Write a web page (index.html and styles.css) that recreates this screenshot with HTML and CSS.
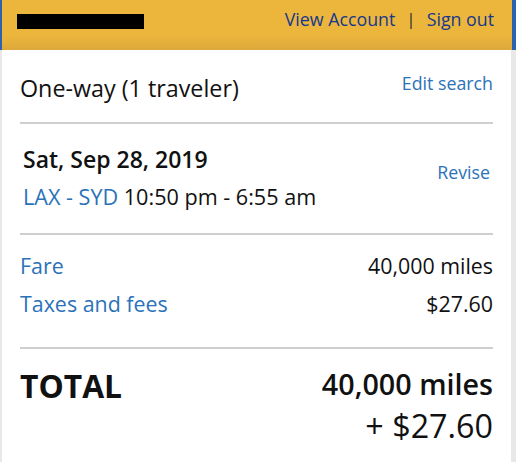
FILE: index.html
```html
<!DOCTYPE html>
<html lang="en">
<head>
<meta charset="utf-8">
<title>Trip summary</title>
<link rel="stylesheet" href="styles.css">
</head>
<body>
<header class="topbar">
  <span class="redacted" aria-label="Hi, traveler"></span>
  <nav class="account">
    <a href="#" class="acct-link">View Account</a>
    <span class="sep">|</span>
    <a href="#" class="acct-link">Sign out</a>
  </nav>
</header>
<main class="panel">
  <section class="row trip">
    <div class="trip-type">One-way (1 traveler)</div>
    <a href="#" class="link small edit">Edit search</a>
  </section>
  <section class="row flight">
    <div class="flight-info">
      <div class="date">Sat, Sep 28, 2019</div>
      <div class="route"><a href="#" class="link">LAX - SYD</a> 10:50 pm - 6:55 am</div>
    </div>
    <a href="#" class="link small revise">Revise</a>
  </section>
  <section class="costs">
    <div class="cost-row"><a href="#" class="link">Fare</a><span>40,000 miles</span></div>
    <div class="cost-row"><a href="#" class="link">Taxes and fees</a><span>$27.60</span></div>
  </section>
  <section class="row total">
    <div class="total-label">TOTAL</div>
    <div class="total-value">
      <div class="miles">40,000 miles</div>
      <div class="cash">+ $27.60</div>
    </div>
  </section>
</main>
</body>
</html>
```
FILE: styles.css
```css
html, body {
  margin: 0;
  padding: 0;
}
body {
  background: #e8e8e8;
  font-family: "Open Sans", "Noto Sans", sans-serif;
  color: #111;
  width: 516px;
  height: 462px;
  overflow: hidden;
}
a {
  text-decoration: none;
}
.topbar {
  height: 50px;
  box-sizing: border-box;
  border-left: 2px solid #2b63ad;
  border-right: 4px solid #2b63ad;
  background: linear-gradient(to bottom, #ecb63c 0, #ecb63c 36px, #dca83b 50px);
  display: flex;
  align-items: center;
  justify-content: space-between;
  padding: 0 18px 0 15px;
}
.redacted {
  display: block;
  width: 127px;
  height: 15px;
  background: #000;
  margin-top: -7px;
}
.account {
  display: flex;
  align-items: center;
  gap: 10px;
  margin-top: -13px;
  font-size: 17.8px;
}
.acct-link {
  color: #15388e;
}
.sep {
  color: #2c2c2c;
  font-size: 17px;
  margin: 0 1px;
}
.panel {
  background: #fff;
  margin: 0 5px 0 2px;
  padding: 0 18px;
  height: 412px;
}
.row {
  display: flex;
  justify-content: space-between;
  align-items: flex-start;
}
.link {
  color: #2b72b8;
}
.small {
  font-size: 17.8px;
  line-height: 22px;
}
.trip {
  padding: 22px 0 21px;
  border-bottom: 2px solid #cfcfcf;
}
.trip-type {
  font-size: 23.3px;
  line-height: 26px;
  margin-top: 3px;
}
.edit {
  margin-top: 0;
}
.flight {
  padding: 22px 3px 23px;
  border-bottom: 2px solid #cfcfcf;
}
.date {
  font-size: 23px;
  line-height: 26px;
  font-weight: 600;
}
.route {
  font-size: 21.6px;
  line-height: 26px;
  margin-top: 12px;
}
.revise {
  margin-top: 15px;
}
.costs {
  padding: 18px 0 30px;
  border-bottom: 2px solid #cfcfcf;
  display: flex;
  flex-direction: column;
  gap: 12px;
}
.cost-row {
  display: flex;
  justify-content: space-between;
  font-size: 21.4px;
  line-height: 26px;
}
.total {
  padding-top: 17px;
}
.total-label {
  font-size: 31.8px;
  line-height: 36px;
  font-weight: 700;
  margin-top: 2px;
}
.total-value {
  text-align: right;
}
.miles {
  font-size: 28.7px;
  line-height: 36px;
  font-weight: 600;
}
.cash {
  font-size: 32.3px;
  line-height: 36px;
  margin-top: 5px;
}
```
